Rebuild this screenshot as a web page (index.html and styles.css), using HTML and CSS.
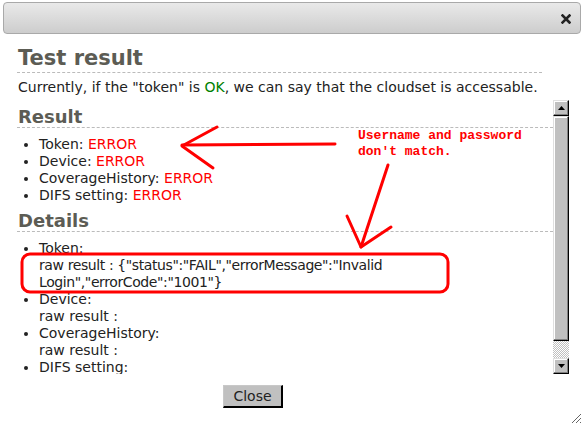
FILE: index.html
```html
<!DOCTYPE html>
<html>
<head>
<meta charset="utf-8">
<link rel="stylesheet" href="styles.css">
</head>
<body>
<div class="dialog">
  <div class="titlebar">
    <svg class="xicon" width="10" height="10" viewBox="0 0 10 10"><path d="M1.5 1.5 L8.5 8.5 M8.5 1.5 L1.5 8.5" stroke="#222" stroke-width="2.6" stroke-linecap="square"/></svg>
  </div>
  <div class="content">
    <h1 class="title">Test result</h1>
    <p class="intro">Currently, if the "token" is <span class="ok">OK</span>, we can say that the cloudset is accessable.</p>
    <div class="scrollwrap">
      <div class="scroll">
        <h2 class="sect">Result</h2>
        <ul class="list">
          <li>Token: <span class="err">ERROR</span></li>
          <li>Device: <span class="err">ERROR</span></li>
          <li>CoverageHistory: <span class="err">ERROR</span></li>
          <li>DIFS setting: <span class="err">ERROR</span></li>
        </ul>
        <h2 class="sect">Details</h2>
        <ul class="list">
          <li>Token:<br><span class="raw">raw result : {"status":"FAIL","errorMessage":"Invalid Login","errorCode":"1001"}</span></li>
          <li>Device:<br>raw result :</li>
          <li>CoverageHistory:<br>raw result :</li>
          <li>DIFS setting:</li>
        </ul>
      </div>
      <div class="scrollbar">
        <div class="sbtn"><svg width="7" height="4" viewBox="0 0 7 4"><path d="M3.5 0 L7 4 L0 4 Z" fill="#000"/></svg></div>
        <div class="thumb"></div>
        <div class="track"></div>
        <div class="sbtn"><svg width="7" height="4" viewBox="0 0 7 4"><path d="M0 0 L7 0 L3.5 4 Z" fill="#000"/></svg></div>
      </div>
    </div>
  </div>
  <div class="buttons">
    <button class="btn">Close</button>
  </div>
  <svg class="grip" width="12" height="12" viewBox="0 0 12 12"><path d="M2 11 L11 2 M6 11 L11 6 M10 11 L11 10" stroke="#666" stroke-width="1"/></svg>

  <svg class="annot" width="583" height="427" viewBox="0 0 583 427">
    <g fill="none" stroke="#f00" stroke-width="3" stroke-linecap="round" stroke-linejoin="round">
      <path d="M335 144 L182 145"/>
      <path d="M217 127 L182 146 L213 168"/>
      <path d="M388 165 L361 247"/>
      <path d="M347 216 L361 247 L391 227"/>
      <rect x="22" y="254" width="426" height="38" rx="8" ry="8"/>
    </g>
  </svg>
  <div class="note">Username and password<br>don't match.</div>
</div>
</body>
</html>
```
FILE: styles.css
```css
html, body {
  margin: 0;
  padding: 0;
  background: #fff;
}
body {
  font-family: "DejaVu Sans", Verdana, sans-serif;
  font-size: 14px;
  color: #222;
}
.dialog {
  position: relative;
  width: 583px;
  height: 427px;
  overflow: hidden;
}
.titlebar {
  margin: 2px 2px 0 3px;
  height: 30px;
  border: 1px solid #a9a9a9;
  border-radius: 4px;
  background: linear-gradient(#e9e9e9, #cdcdcd);
  display: flex;
  align-items: center;
  justify-content: flex-end;
  padding-right: 9px;
}
.xicon {
  display: block;
  margin-top: 1px;
}
.content {
  padding-left: 17px;
}
.title {
  margin: 10px 0 0 0;
  width: 524px;
  font-size: 21px;
  line-height: 28px;
  font-weight: bold;
  color: #5c5c54;
  border-bottom: 1px dashed #bbb;
  padding-left: 1px;
}
.intro {
  margin: 6px 0 4px 1px;
  line-height: 17px;
}
.ok { color: #008000; }
.err { color: #f00; }
.raw { letter-spacing: -0.4px; }
.scrollwrap {
  display: flex;
  height: 274px;
  width: 552px;
}
.scroll {
  flex: 1;
  overflow: hidden;
}
.sect {
  margin: 0;
  padding: 7px 0 0 1px;
  font-size: 18px;
  line-height: 20px;
  font-weight: bold;
  color: #5c5c54;
  border-bottom: 1px dashed #bbb;
}
.list {
  margin: 8px 0 0 0;
  padding-left: 22px;
  line-height: 17px;
  width: 380px;
}
.scrollbar {
  width: 16px;
  display: flex;
  flex-direction: column;
}
.sbtn {
  height: 16px;
  box-sizing: border-box;
  background: #c0c0c0;
  border-top: 1px solid #dfdfdf;
  border-left: 1px solid #dfdfdf;
  border-right: 1px solid #000;
  border-bottom: 1px solid #000;
  box-shadow: inset -1px -1px 0 #808080, inset 1px 1px 0 #fff;
  display: flex;
  align-items: center;
  justify-content: center;
}
.thumb {
  height: 225px;
  box-sizing: border-box;
  background: #c0c0c0;
  border-top: 1px solid #dfdfdf;
  border-left: 1px solid #dfdfdf;
  border-right: 1px solid #000;
  border-bottom: 1px solid #000;
  box-shadow: inset -1px -1px 0 #808080, inset 1px 1px 0 #fff;
}
.track {
  flex: 1;
  background: repeating-conic-gradient(#c0c0c0 0 25%, #fff 0 50%) 0 0 / 2px 2px;
}
.buttons {
  padding: 11px 0 0 223px;
}
.btn {
  font-family: "DejaVu Sans", Verdana, sans-serif;
  font-size: 14px;
  color: #222;
  width: 60px;
  height: 23px;
  padding: 0;
  background: #c0c0c0;
  border: none;
  border-right: 2px solid #000;
  border-bottom: 2px solid #000;
  border-left: 1px solid #c8c8c8;
  border-top: 1px solid #c8c8c8;
  box-sizing: border-box;
  text-align: center;
}
.grip {
  position: absolute;
  right: 1px;
  bottom: 3px;
}
.annot {
  position: absolute;
  left: 0;
  top: 0;
  pointer-events: none;
}
.note {
  position: absolute;
  left: 358px;
  top: 128px;
  font-family: "Liberation Mono", "DejaVu Sans Mono", monospace;
  font-weight: bold;
  font-size: 13px;
  line-height: 16px;
  color: #f00;
}
```
